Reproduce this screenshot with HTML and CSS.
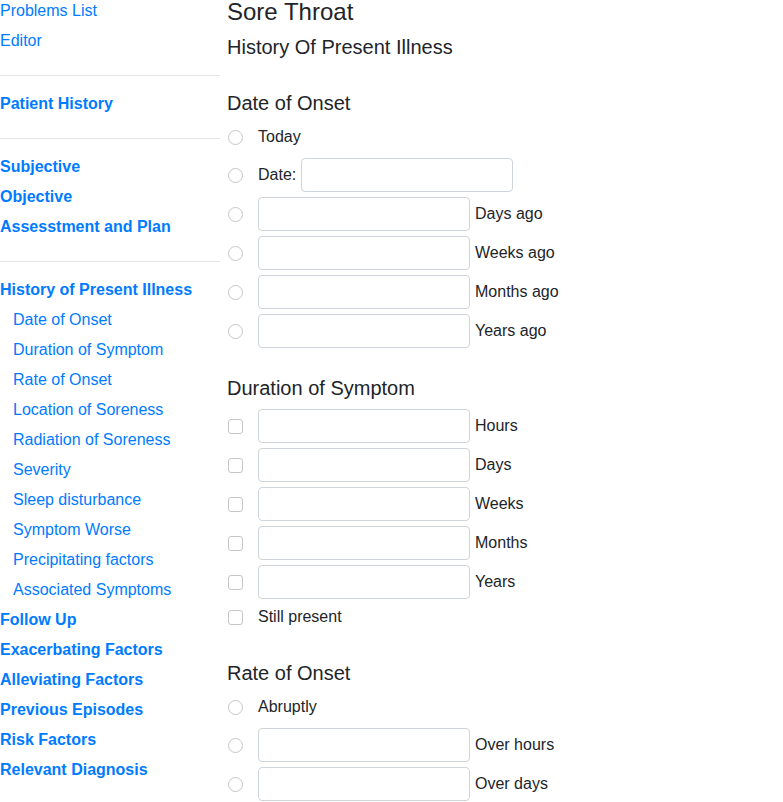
FILE: index.html
```html
<!DOCTYPE html>
<html lang="en">
<head>
<meta charset="utf-8">
<title>Sore Throat</title>
<link rel="stylesheet" href="styles.css">
</head>
<body>
<div class="page">
  <nav class="sidebar">
    <a class="nav-link" href="#">Problems List</a>
    <a class="nav-link" href="#">Editor</a>
    <hr class="divider">
    <a class="nav-link strong" href="#">Patient History</a>
    <hr class="divider">
    <a class="nav-link strong" href="#">Subjective</a>
    <a class="nav-link strong" href="#">Objective</a>
    <a class="nav-link strong" href="#">Assesstment and Plan</a>
    <hr class="divider">
    <a class="nav-link strong" href="#">History of Present Illness</a>
    <a class="nav-link sub" href="#">Date of Onset</a>
    <a class="nav-link sub" href="#">Duration of Symptom</a>
    <a class="nav-link sub" href="#">Rate of Onset</a>
    <a class="nav-link sub" href="#">Location of Soreness</a>
    <a class="nav-link sub" href="#">Radiation of Soreness</a>
    <a class="nav-link sub" href="#">Severity</a>
    <a class="nav-link sub" href="#">Sleep disturbance</a>
    <a class="nav-link sub" href="#">Symptom Worse</a>
    <a class="nav-link sub" href="#">Precipitating factors</a>
    <a class="nav-link sub" href="#">Associated Symptoms</a>
    <a class="nav-link strong" href="#">Follow Up</a>
    <a class="nav-link strong" href="#">Exacerbating Factors</a>
    <a class="nav-link strong" href="#">Alleviating Factors</a>
    <a class="nav-link strong" href="#">Previous Episodes</a>
    <a class="nav-link strong" href="#">Risk Factors</a>
    <a class="nav-link strong" href="#">Relevant Diagnosis</a>
  </nav>

  <main class="content">
    <h4 class="title">Sore Throat</h4>
    <h5 class="subtitle">History Of Present Illness</h5>

    <section class="section">
      <h5 class="section-title">Date of Onset</h5>
      <div class="row text-row"><input type="radio" class="radio" name="onset" disabled><div class="field">Today</div></div>
      <div class="row"><input type="radio" class="radio" name="onset" disabled><div class="field"><span>Date:</span><input type="text" class="box"></div></div>
      <div class="row"><input type="radio" class="radio" name="onset" disabled><div class="field"><input type="text" class="box"><span>Days ago</span></div></div>
      <div class="row"><input type="radio" class="radio" name="onset" disabled><div class="field"><input type="text" class="box"><span>Weeks ago</span></div></div>
      <div class="row"><input type="radio" class="radio" name="onset" disabled><div class="field"><input type="text" class="box"><span>Months ago</span></div></div>
      <div class="row"><input type="radio" class="radio" name="onset" disabled><div class="field"><input type="text" class="box"><span>Years ago</span></div></div>
    </section>

    <section class="section">
      <h5 class="section-title">Duration of Symptom</h5>
      <div class="row"><input type="checkbox" class="check" disabled><div class="field"><input type="text" class="box"><span>Hours</span></div></div>
      <div class="row"><input type="checkbox" class="check" disabled><div class="field"><input type="text" class="box"><span>Days</span></div></div>
      <div class="row"><input type="checkbox" class="check" disabled><div class="field"><input type="text" class="box"><span>Weeks</span></div></div>
      <div class="row"><input type="checkbox" class="check" disabled><div class="field"><input type="text" class="box"><span>Months</span></div></div>
      <div class="row"><input type="checkbox" class="check" disabled><div class="field"><input type="text" class="box"><span>Years</span></div></div>
      <div class="row text-row"><input type="checkbox" class="check" disabled><div class="field">Still present</div></div>
    </section>

    <section class="section">
      <h5 class="section-title">Rate of Onset</h5>
      <div class="row text-row"><input type="radio" class="radio" name="rate" disabled><div class="field">Abruptly</div></div>
      <div class="row"><input type="radio" class="radio" name="rate" disabled><div class="field"><input type="text" class="box"><span>Over hours</span></div></div>
      <div class="row"><input type="radio" class="radio" name="rate" disabled><div class="field"><input type="text" class="box"><span>Over days</span></div></div>
    </section>
  </main>
</div>
</body>
</html>
```

FILE: styles.css
```css
html, body {
  margin: 0;
  padding: 0;
  background: #fff;
}

body {
  font-family: "Liberation Sans", Arial, sans-serif;
  font-size: 16px;
  line-height: 24px;
  color: #212529;
}

.page {
  display: grid;
  grid-template-columns: 220px 1fr;
  column-gap: 7px;
  align-items: start;
  margin-top: -5px;
}

.sidebar {
  display: flex;
  flex-direction: column;
  padding-top: 1px;
}

.nav-link {
  display: block;
  padding: 3px 0;
  line-height: 24px;
  color: #007bff;
  text-decoration: none;
  white-space: nowrap;
}

.nav-link.strong {
  font-weight: 700;
}

.nav-link.sub {
  padding-left: 13px;
}

.divider {
  margin: 19px 0 13px;
  border: 0;
  border-top: 1px solid #e5e5e5;
  height: 0;
}

.content {
  display: flex;
  flex-direction: column;
}

.title {
  margin: 2px 0 9px;
  font-size: 24px;
  line-height: 29px;
  font-weight: 500;
}

.subtitle {
  margin: 0 0 9px;
  font-size: 20px;
  line-height: 24px;
  font-weight: 500;
}

.section {
  padding-top: 23px;
}

.section-title {
  margin: 0 0 9px;
  font-size: 20px;
  line-height: 24px;
  font-weight: 500;
}

.row {
  display: flex;
  align-items: center;
  min-height: 34px;
  margin-bottom: 5px;
}

.row.text-row {
  min-height: 24px;
  margin-bottom: 10px;
}

.row.text-row .field {
  padding-top: 1px;
  margin-bottom: -1px;
}

.field {
  display: flex;
  align-items: center;
  gap: 5px;
  white-space: nowrap;
}

.radio,
.check {
  -webkit-appearance: none;
  appearance: none;
  flex: none;
  width: 15px;
  height: 15px;
  margin: 0 15px 0 1px;
  border: 1px solid #c6c6c6;
  background: #fff;
}

.row.text-row .radio,
.row.text-row .check {
  margin-top: 2px;
}

.radio {
  border-radius: 50%;
}

.check {
  border-radius: 3px;
}

.box {
  box-sizing: border-box;
  width: 212px;
  height: 34px;
  margin: 0;
  padding: 0 8px;
  border: 1px solid #ced4da;
  border-radius: 4px;
  background: #fff;
  font: inherit;
}
```
